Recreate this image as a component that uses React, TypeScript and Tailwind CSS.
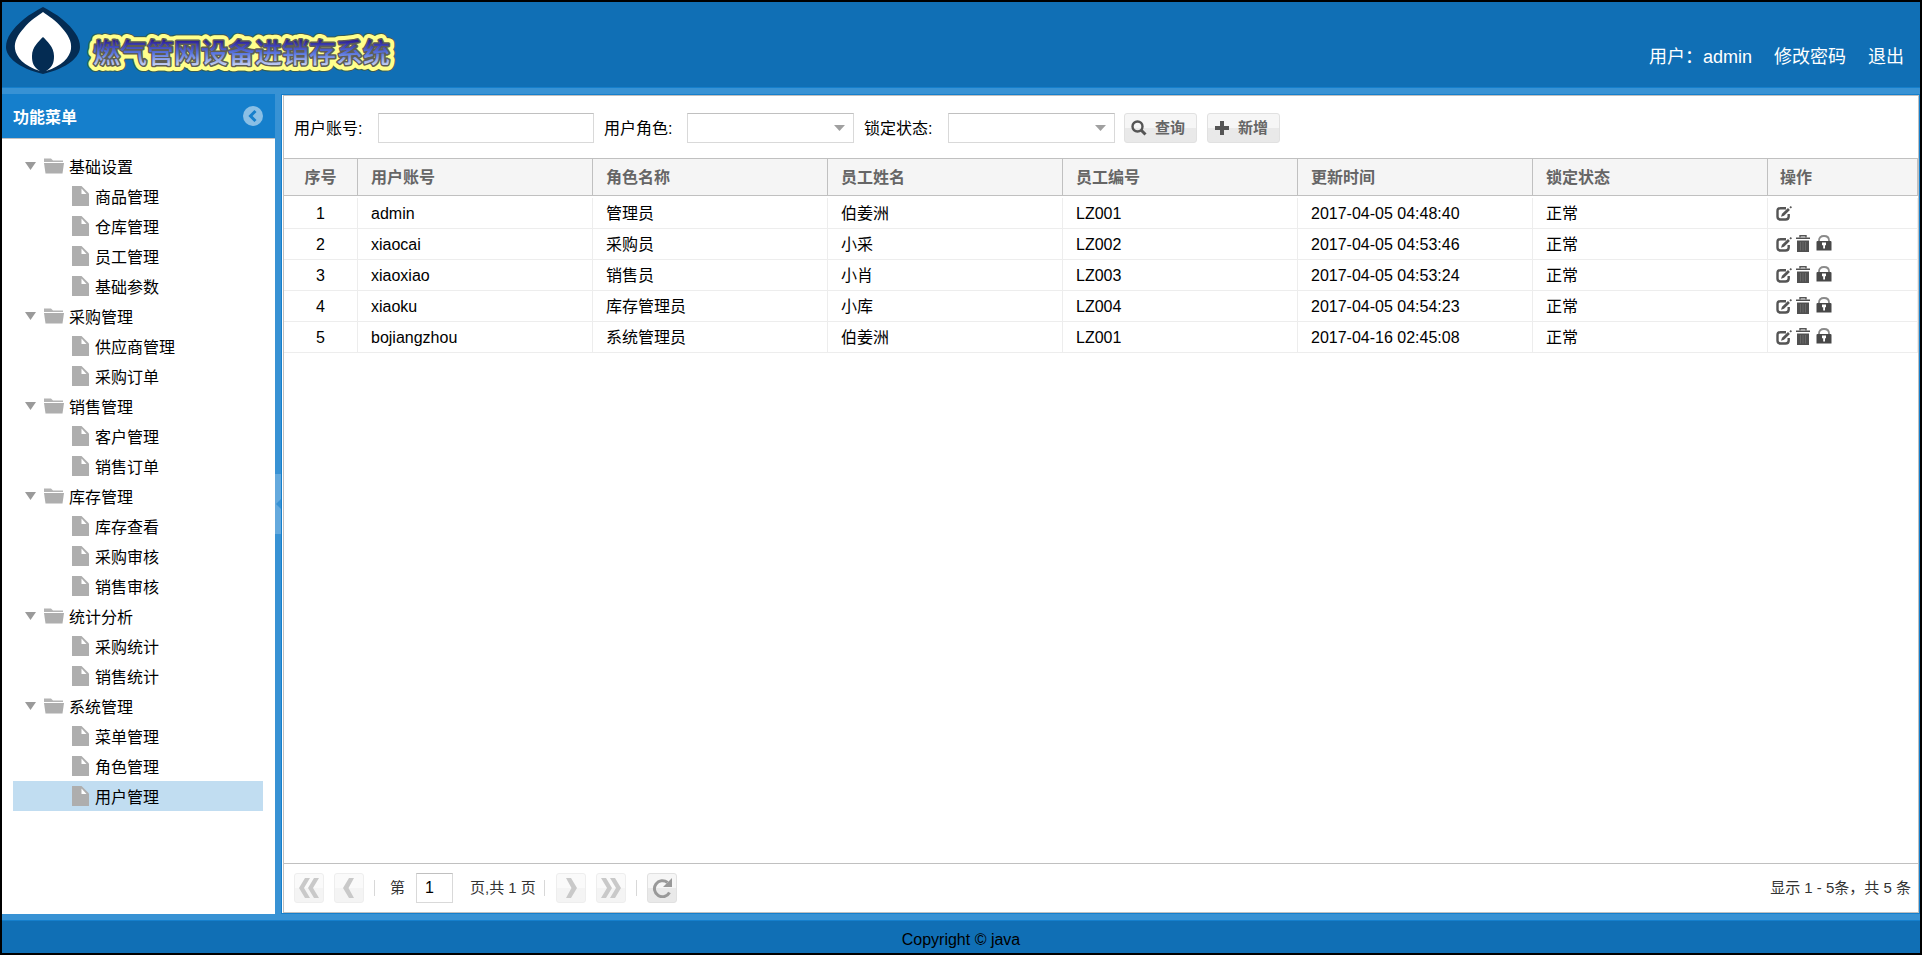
import React from "react";

type Group = { name: string; items: string[] };

const MENU: Group[] = [
  { name: "基础设置", items: ["商品管理", "仓库管理", "员工管理", "基础参数"] },
  { name: "采购管理", items: ["供应商管理", "采购订单"] },
  { name: "销售管理", items: ["客户管理", "销售订单"] },
  { name: "库存管理", items: ["库存查看", "采购审核", "销售审核"] },
  { name: "统计分析", items: ["采购统计", "销售统计"] },
  { name: "系统管理", items: ["菜单管理", "角色管理", "用户管理"] },
];

const COLUMNS = ["用户账号", "角色名称", "员工姓名", "员工编号", "更新时间", "锁定状态"];

const USERS = [
  ["admin", "管理员", "伯姜洲", "LZ001", "2017-04-05 04:48:40", "正常"],
  ["xiaocai", "采购员", "小采", "LZ002", "2017-04-05 04:53:46", "正常"],
  ["xiaoxiao", "销售员", "小肖", "LZ003", "2017-04-05 04:53:24", "正常"],
  ["xiaoku", "库存管理员", "小库", "LZ004", "2017-04-05 04:54:23", "正常"],
  ["bojiangzhou", "系统管理员", "伯姜洲", "LZ001", "2017-04-16 02:45:08", "正常"],
];

function FlameLogo() {
  return (
    <svg width="74" height="68" viewBox="0 0 74 68" aria-hidden="true">
      <path d="M37 0C44 4 50 7 56 12C68 22 74 31 74 40C74 50 62 61 37 67C12 61 0 50 0 40C0 31 6 22 18 12C24 7 30 4 37 0Z" fill="#042c53" />
      <path d="M37 5C42 9 50 13 56 21C62 28 66 34 65 42C64 50 56 59 40 64C47 60 48 55 48 49C48 40 41 34 37 30C33 34 26 40 26 49C26 55 27 60 34 64C18 59 10 50 9 42C8 34 12 28 18 21C24 13 32 9 37 5Z" fill="#fff" />
    </svg>
  );
}

function LogoTitle() {
  return (
    <svg width="324" height="44" viewBox="0 0 324 44" role="img" aria-label="燃气管网设备进销存系统">
      <defs>
        <linearGradient id="title-fill" x1="0" y1="0" x2="0" y2="1">
          <stop offset="0.2" stopColor="#2a1a90" />
          <stop offset="0.55" stopColor="#5b78e0" />
          <stop offset="0.9" stopColor="#d5dcf5" />
        </linearGradient>
      </defs>
      <g fontFamily="'Noto Sans CJK SC', sans-serif" fontSize="27" fontWeight="500" strokeLinejoin="round">
        <text x="13" y="32" fill="none" stroke="#3c5a50" strokeWidth="13">燃气管网设备进销存系统</text>
        <text x="13" y="32" fill="none" stroke="#ffff8c" strokeWidth="11">燃气管网设备进销存系统</text>
        <text x="13" y="32" fill="none" stroke="#5d5d55" strokeWidth="3">燃气管网设备进销存系统</text>
        <text x="13" y="32" fill="url(#title-fill)">燃气管网设备进销存系统</text>
      </g>
    </svg>
  );
}

function Caret() {
  return (
    <svg width="11" height="8" viewBox="0 0 11 8" aria-hidden="true">
      <path d="M0 0H11L5.500 8Z" fill="#9a9a9a" />
    </svg>
  );
}

function FolderIcon() {
  return (
    <svg width="20" height="16" viewBox="0 0 20 16" aria-hidden="true">
      <path d="M0 0.500H7L9 2.500H19V4H0Z" fill="#b4b4b4" />
      <path d="M0 5H20L18.500 15.500H1.500Z" fill="#aeaeae" />
    </svg>
  );
}

function FileIcon() {
  return (
    <svg width="17" height="20" viewBox="0 0 17 20" aria-hidden="true">
      <path d="M0 0H9.500L17 7.500V20H0Z" fill="#aeaeae" />
      <path d="M9.500 2.500V8H14.500Z" fill="#fff" />
    </svg>
  );
}

function EditIcon() {
  return (
    <svg width="16" height="15" viewBox="0 0 16 15" aria-hidden="true">
      <path d="M10 2.200H4.500Q1.500 2.200 1.500 5V10.500Q1.500 13.500 4.500 13.500H9.500Q12.700 13.500 12.700 10.500V8" fill="none" stroke="#555" strokeWidth="2.400" />
      <path d="M5 10.800L6 7.800L12 2L13.900 3.900L8 9.800Z" fill="#555" />
      <path d="M14.800 0L16 1.200L14.800 2.600L13.400 1.300Z" fill="#555" />
    </svg>
  );
}

function TrashIcon() {
  return (
    <svg width="14" height="17" viewBox="0 0 14 17" aria-hidden="true">
      <path d="M4 2.500V0.800H10V2.500" fill="none" stroke="#555" strokeWidth="1.400" />
      <path d="M0 2.500H14V4H0Z" fill="#505050" />
      <path d="M1 5.500H13V17H1Z" fill="#505050" />
      <path d="M4.500 7V15.500M7 7V15.500M9.500 7V15.500" stroke="#707070" strokeWidth="0.800" />
    </svg>
  );
}

function LockIcon() {
  return (
    <svg width="16" height="16" viewBox="0 0 16 16" aria-hidden="true">
      <path d="M3 7V5.500Q3 1 8 1Q13 1 13 5.500V7" fill="none" stroke="#8a8a8a" strokeWidth="1.800" />
      <path d="M1.500 6H14.500Q15.500 6 15.500 7V15.500H0.500V7Q0.500 6 1.500 6Z" fill="#484848" />
      <path d="M6 7.500H10V10.200H9V13.500H7.200V10.200H6Z" fill="#fff" />
    </svg>
  );
}

function SearchIcon() {
  return (
    <svg width="16" height="16" viewBox="0 0 16 16" aria-hidden="true">
      <circle cx="6.500" cy="6.500" r="5" fill="none" stroke="#555" strokeWidth="2.400" />
      <path d="M10 10L14.500 14.500" stroke="#555" strokeWidth="3" />
    </svg>
  );
}

function PlusIcon() {
  return (
    <svg width="14" height="14" viewBox="0 0 14 14" aria-hidden="true">
      <path d="M7 0V14M0 7H14" stroke="#555" strokeWidth="4" />
    </svg>
  );
}

function Chevrons({ double, flip }: { double?: boolean; flip?: boolean }) {
  return (
    <svg width="22" height="20" viewBox="0 0 22 20" className={flip ? "rotate-180" : ""} aria-hidden="true">
      {double ? (
        <path d="M7 0H12L6 10L12 20H7L1 10ZM16 0H21L15 10L21 20H16L10 10Z" fill="#c9c9c9" />
      ) : (
        <path d="M11 0H16L10.500 10L16 20H11L5 10Z" fill="#c9c9c9" />
      )}
    </svg>
  );
}

function RefreshIcon() {
  return (
    <svg width="22" height="20" viewBox="0 0 22 20" aria-hidden="true">
      <path d="M16.500 4.500A8 8 0 1 0 18.500 14.500" fill="none" stroke="#999" strokeWidth="3" />
      <path d="M21 0V9H12Z" fill="#999" />
    </svg>
  );
}

function Combo({ id }: { id: string }) {
  return (
    <span className="relative flex">
      <select id={id} className="h-[30px] w-[167px] appearance-none border border-[#d9d9d9] border-t-[#c0c0c0] bg-white px-2">
        <option value=""></option>
      </select>
      <span className="pointer-events-none absolute inset-y-0 right-[9px] flex items-center">
        <svg width="11" height="6" viewBox="0 0 11 6" aria-hidden="true">
          <path d="M0 0H11L5.500 6Z" fill="#a0a0a0" />
        </svg>
      </span>
    </span>
  );
}

const BUTTON_FACE =
  "flex h-[30px] items-center rounded-[3px] border border-[#e1e1e1] bg-linear-to-b from-[#f6f6f6] from-50% to-[#e9e9e9] to-50%";

function PagerButton({ label, disabled, children }: { label: string; disabled?: boolean; children: React.ReactNode }) {
  return (
    <button type="button" aria-label={label} disabled={disabled} className={`${BUTTON_FACE} w-[30px] justify-center disabled:border-[#eeeeee] disabled:from-[#fafafa] disabled:to-[#f4f4f4]`}>
      {children}
    </button>
  );
}

function Separator() {
  return <span className="h-4 w-px bg-[#d8d8d8]" />;
}

function Sidebar() {
  return (
    <nav className="flex w-[273px] shrink-0 flex-col bg-white">
      <div className="flex h-[45px] items-center justify-between border-b border-[#c0c0c0] bg-[#157fcc] pr-3 pl-[11px]">
        <h2 className="pt-[3px] text-base font-bold text-white">功能菜单</h2>
        <button type="button" aria-label="收起菜单" className="flex">
          <svg width="20" height="20" viewBox="0 0 20 20" aria-hidden="true">
            <circle cx="10" cy="10" r="10" fill="#8abfe5" />
            <path d="M12.500 5L7.500 10L12.500 15" fill="none" stroke="#157fcc" strokeWidth="3" />
          </svg>
        </button>
      </div>
      <ul className="pt-3 pr-3 pl-[11px]">
        {MENU.map((group) => (
          <li key={group.name}>
            <div className="flex h-[30px] items-center pl-3">
              <Caret />
              <span className="mr-[5px] ml-2 pb-px">
                <FolderIcon />
              </span>
              <span className="pt-[3px]">{group.name}</span>
            </div>
            <ul>
              {group.items.map((item) => (
                <li key={item}>
                  <a href="#" className={`flex h-[30px] items-center gap-[6px] pl-[59px] ${item === "用户管理" ? "bg-[#c1ddf1]" : ""}`}>
                    <FileIcon />
                    <span className="pt-[3px]">{item}</span>
                  </a>
                </li>
              ))}
            </ul>
          </li>
        ))}
      </ul>
    </nav>
  );
}

function UserTable() {
  return (
    <table className="w-full table-fixed border-separate border-spacing-0">
      <colgroup>
        <col className="w-[74px]" />
        {COLUMNS.map((c) => (
          <col key={c} />
        ))}
        <col className="w-[150px]" />
      </colgroup>
      <thead>
        <tr className="h-[38px] bg-[#f5f5f5] text-left text-[#666]">
          <th className="border-y border-r border-[#c0c0c0] pt-[2px] text-center font-bold">序号</th>
          {COLUMNS.map((c) => (
            <th key={c} className="border-y border-r border-[#c0c0c0] px-[13px] pt-[2px] font-bold">{c}</th>
          ))}
          <th className="border-y border-r border-[#c0c0c0] px-3 pt-[2px] font-bold">操作</th>
        </tr>
      </thead>
      <tbody>
        <tr aria-hidden="true">
          <td colSpan={8} className="h-[2px]"></td>
        </tr>
        {USERS.map((user, i) => (
          <tr key={user[0]} className="h-[31px]">
            <td className="border-r border-b border-[#ededed] pt-[2px] text-center">{i + 1}</td>
            {user.map((value, c) => (
              <td key={c} className="border-r border-b border-[#ededed] px-[13px] pt-[2px]">{value}</td>
            ))}
            <td className="border-r border-b border-[#ededed] px-2">
              <div className="flex items-center">
                <button type="button" aria-label="编辑" className="flex"><EditIcon /></button>
                {i > 0 && (
                  <>
                    <button type="button" aria-label="删除" className="ml-1 flex pb-px"><TrashIcon /></button>
                    <button type="button" aria-label="锁定" className="ml-[6px] flex pb-[3px]"><LockIcon /></button>
                  </>
                )}
              </div>
            </td>
          </tr>
        ))}
      </tbody>
    </table>
  );
}

export default function App() {
  return (
    <div className="flex min-h-screen flex-col border-2 border-black bg-[#3892d4] font-['Liberation_Sans','Noto_Sans_CJK_SC',sans-serif] text-base leading-6 text-black">
      <header className="flex h-[86px] items-start justify-between border-b border-[#157fcc] bg-[#106fb5] pr-4 pl-1">
        <div className="flex items-start pt-[5px]">
          <FlameLogo />
          <div className="pt-6"><LogoTitle /></div>
        </div>
        <div className="flex items-center gap-[22px] pt-[41px] text-[18px] leading-7 text-white">
          <span>用户：admin</span>
          <a href="#">修改密码</a>
          <a href="#">退出</a>
        </div>
      </header>
      <div className="flex flex-1 py-[6px]">
        <Sidebar />
        <div className="flex w-[6px] shrink-0 items-center">
          <button type="button" aria-label="折叠" className="flex h-[60px] w-full items-center justify-end bg-[#64a9dd]">
            <svg width="5" height="10" viewBox="0 0 5 10" aria-hidden="true">
              <path d="M5 0V10L0 5Z" fill="#3892d4" />
            </svg>
          </button>
        </div>
        <main className="flex min-w-0 flex-1 flex-col border border-[#157fcc] bg-white pl-px">
          <div className="flex flex-1 flex-col border border-[#c0c0c0]">
            <form className="flex h-[62px] items-center pt-[2px] pl-[10px]">
              <label htmlFor="account" className="w-[84px] pt-px">用户账号:</label>
              <input id="account" className="h-[30px] w-[216px] border border-[#d9d9d9] border-t-[#c0c0c0] px-2" />
              <label htmlFor="role" className="ml-[10px] w-[83px] pt-px">用户角色:</label>
              <Combo id="role" />
              <label htmlFor="locked" className="ml-[10px] w-[84px] pt-px">锁定状态:</label>
              <Combo id="locked" />
              <button type="button" className={`${BUTTON_FACE} ml-[9px] w-[73px] gap-2 pl-[6px] text-[15px] font-bold text-[#666]`}>
                <SearchIcon />
                查询
              </button>
              <button type="button" className={`${BUTTON_FACE} ml-[10px] w-[73px] gap-[9px] pl-[7px] text-[15px] font-bold text-[#666]`}>
                <PlusIcon />
                新增
              </button>
            </form>
            <UserTable />
            <div className="mt-auto flex h-[49px] items-center border-t border-[#c0c0c0] pr-[7px] pl-[10px] text-[15px] text-[#333]">
              <PagerButton label="首页" disabled><Chevrons double /></PagerButton>
              <span className="w-[10px]" />
              <PagerButton label="上一页" disabled><Chevrons /></PagerButton>
              <span className="w-[10px]" />
              <Separator />
              <label htmlFor="page" className="mr-[11px] ml-[15px]">第</label>
              <input id="page" defaultValue="1" className="h-[30px] w-[37px] border border-[#d9d9d9] border-t-[#c0c0c0] pl-2 text-base text-black" />
              <span className="mr-2 ml-[17px]">页,共 1 页</span>
              <Separator />
              <span className="w-[11px]" />
              <PagerButton label="下一页" disabled><Chevrons flip /></PagerButton>
              <span className="w-[10px]" />
              <PagerButton label="末页" disabled><Chevrons double flip /></PagerButton>
              <span className="w-[10px]" />
              <Separator />
              <span className="w-[10px]" />
              <PagerButton label="刷新"><RefreshIcon /></PagerButton>
              <span className="ml-auto">显示 1 - 5条，共 5 条</span>
            </div>
          </div>
        </main>
      </div>
      <footer className="h-[33px] border-t border-[#157fcc] bg-[#106fb5] pt-[7px] text-center">Copyright © java</footer>
    </div>
  );
}
